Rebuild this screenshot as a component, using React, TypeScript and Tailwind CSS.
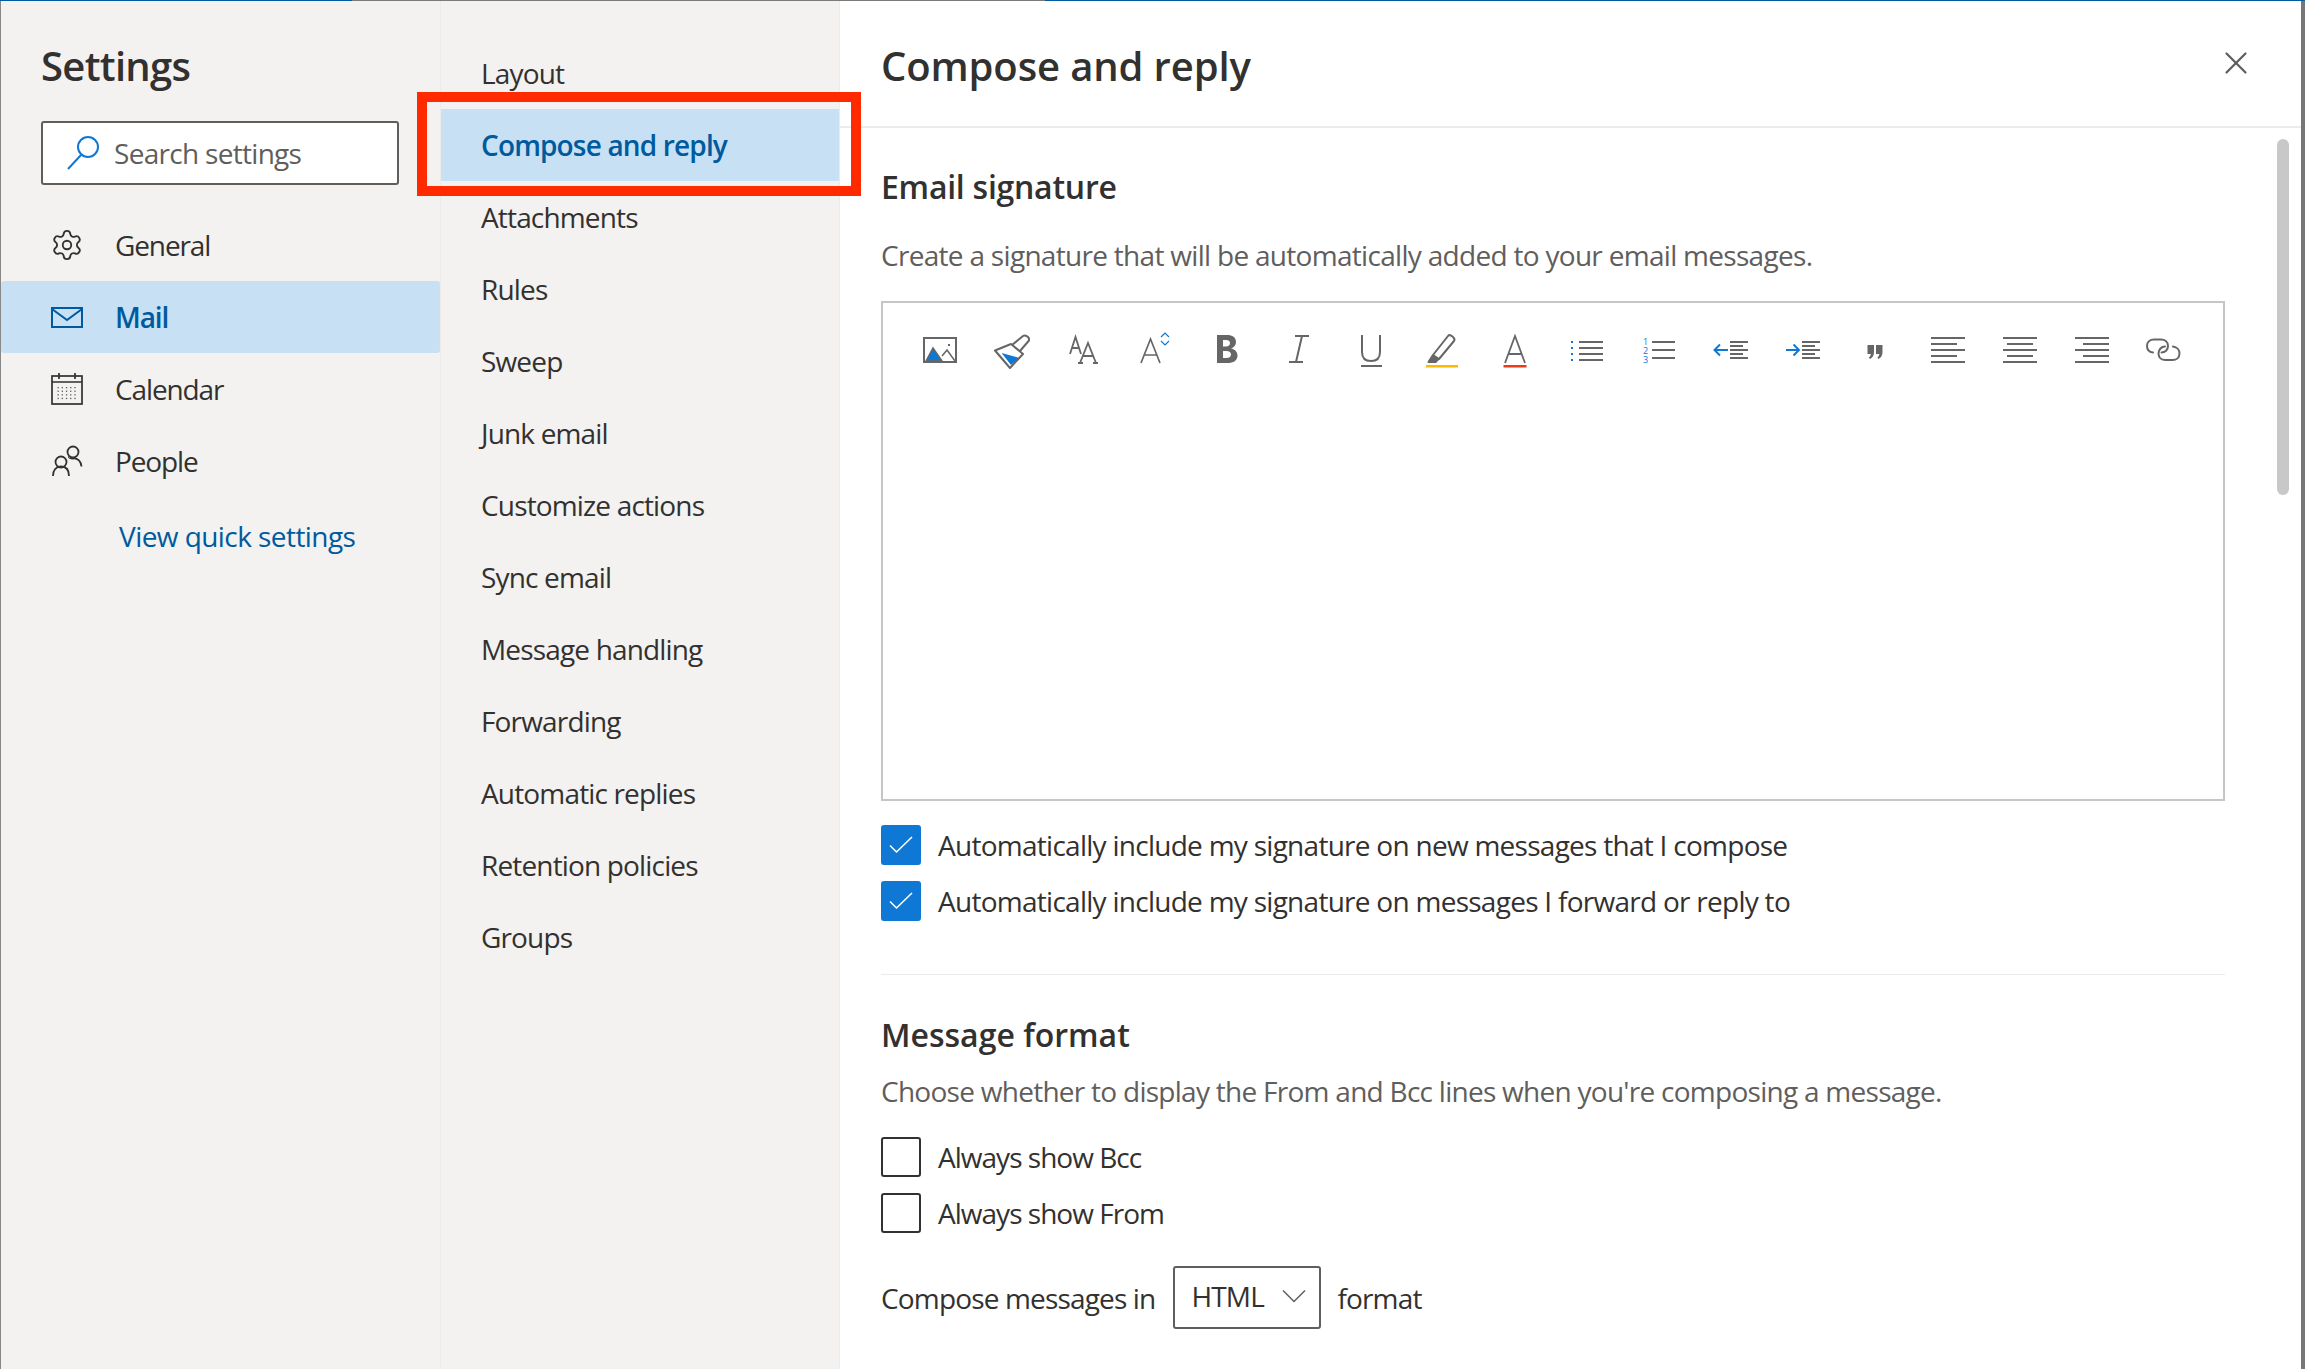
import { Settings as Gear, X } from "lucide-react"

const FONT = "font-['Open_Sans','Noto_Sans',sans-serif]"

const SUBNAV = [
  "Layout",
  "Compose and reply",
  "Attachments",
  "Rules",
  "Sweep",
  "Junk email",
  "Customize actions",
  "Sync email",
  "Message handling",
  "Forwarding",
  "Automatic replies",
  "Retention policies",
  "Groups"
]

function MailIcon() {
  return (
    <svg width="34" height="24" viewBox="0 0 34 24" fill="none" stroke="#005a9e" strokeWidth="2">
      <rect x="2" y="3" width="30" height="19" />
      <path d="M2 4l15 11L32 4" />
    </svg>
  )
}

function CalendarIcon() {
  const dots = []
  for (let r = 0; r < 4; r++) {
    for (let c = 0; c < 5; c++) {
      dots.push(<rect key={`${r}-${c}`} x={7.500 + c * 4.200} y={15 + r * 3.600} width="1.300" height="1.300" fill="#605e5c" stroke="none" />)
    }
  }
  return (
    <svg width="34" height="34" viewBox="0 0 34 34" fill="none" stroke="#323130" strokeWidth="1.700">
      <rect x="2" y="4" width="30" height="28" />
      <path d="M2 10h30M9 1v6M25 1v6" />
      {dots}
    </svg>
  )
}

function PeopleIcon() {
  return (
    <svg width="34" height="34" viewBox="0 0 34 34" fill="none" stroke="#323130" strokeWidth="1.800">
      <circle cx="23" cy="8" r="5.500" />
      <circle cx="11" cy="18" r="5.500" />
      <path d="M3 32c0-6 3-9.500 8-9.500s8 3.500 8 9.500" />
      <path d="M19 13c-.5 0 2 2 4 1.500 5-.5 8 3 8.500 8" />
    </svg>
  )
}

function NavRow({ icon, label, active }: { icon: React.ReactNode; label: string; active?: boolean }) {
  return (
    <div
      className={`flex h-[72px] items-center rounded-[3px] tracking-[-0.04em] ${active ? "bg-[#c7e0f4] font-semibold text-[#005a9e]" : "text-[#323130]"}`}
    >
      <span className="flex w-[114px] justify-center pl-[18px]">{icon}</span>
      <span>{label}</span>
    </div>
  )
}

function Check({ on, label, short }: { on?: boolean; label: string; short?: boolean }) {
  return (
    <div className={`flex h-[40px] items-center gap-[17px] text-[#323130] ${short ? "tracking-[-0.035em]" : "tracking-[-0.026em]"}`}>
      {on ? (
        <span className="h-[40px] w-[40px] rounded-[3px] bg-[#0f78d4]">
          <svg width="40" height="40" viewBox="0 0 40 40" fill="none" stroke="#fff" strokeWidth="1.600">
            <path d="M9 20.500l6.500 6.500L31 12" />
          </svg>
        </span>
      ) : (
        <span className="h-[40px] w-[40px] rounded-[3px] border-2 border-[#323130] bg-white" />
      )}
      <span>{label}</span>
    </div>
  )
}

const GRAY = "#666666"
const BLUE = "#0f78d4"

function Lines({ rows }: { rows: [number, number, number][] }) {
  return (
    <path d={rows.map(([x1, x2, y]) => `M${x1} ${y}H${x2}`).join("")} stroke={GRAY} strokeWidth="2" fill="none" />
  )
}

const TOOLBAR: React.ReactNode[] = [
  // picture
  <g key="pic" transform="translate(1 0)">
    <rect x="5" y="9" width="32" height="24" fill="none" stroke={GRAY} strokeWidth="2" />
    <path d="M7 32l7-13 9 13z" fill={BLUE} stroke={GRAY} strokeWidth="1.500" />
    <path d="M23 27l5-6 8 11" fill="none" stroke={GRAY} strokeWidth="1.500" />
    <rect x="29" y="15" width="2" height="2" fill={GRAY} />
  </g>,
  // format painter
  <g key="brush" fill="none" stroke={GRAY} strokeWidth="2" transform="translate(2 0)">
    <path d="M9.600 24l17.900 5-8.500 7z" fill={BLUE} stroke="none" />
    <path d="M3 21.500L19 15l12 10-13 14z" strokeLinejoin="round" />
    <path d="M20 16L31 7c2-1.500 7 1 6 4.500L28 22" strokeLinejoin="round" />
  </g>,
  // font size
  <g key="size" fill="none" stroke={GRAY} strokeWidth="1.800">
    <path d="M8 25l5.500-17L19 25M10 19h7" />
    <path d="M18 34l8-20 8 20M16 34h5M31 34h5M20.500 27h11" />
  </g>,
  // grow font
  <g key="grow" fill="none">
    <path d="M7 34l9.500-24L26 34M10 26h13" stroke={GRAY} strokeWidth="1.700" />
    <path d="M27 8l4-4 4 4M27 12l4 4 4-4" stroke={BLUE} strokeWidth="1.200" />
  </g>,
  // bold
  <path
    key="bold"
    fillRule="evenodd"
    fill={GRAY}
    d="M11 6h10c5.500 0 9 2.500 9 7 0 3-2 5.500-5 6.500 4 .7 6.500 3.500 6.500 7 0 5-4 7.500-10 7.500H11zM17 11v6.500h3c2.500 0 4-1.200 4-3.500 0-2-1.500-3-4-3zM17 22v7h3.500c3 0 4.500-1.300 4.500-3.500 0-2.300-1.700-3.500-4.500-3.500z"
  />,
  // italic
  <path key="italic" d="M17 7h14M11 33h14M24 7l-6 26" fill="none" stroke={GRAY} strokeWidth="2" />,
  // underline
  <path key="under" d="M12 6v17c0 6 3.500 9 9 9s9-3 9-9V6M11 37h21" fill="none" stroke={GRAY} strokeWidth="2" />,
  // highlight
  <g key="hl">
    <path d="M11 26l-4.500 7h7l3-3M11 26l15-19c2-2.500 8 2 6 5L17 30z" fill="none" stroke={GRAY} strokeWidth="2" strokeLinejoin="round" />
    <path d="M11 26l-4.500 7h7l3-3z" fill={GRAY} />
    <rect x="4" y="36" width="32" height="2.500" fill="#ffb900" />
  </g>,
  // font colour
  <g key="color">
    <path d="M11 34l10-27 10 27M14.500 25h13" fill="none" stroke={GRAY} strokeWidth="1.800" />
    <rect x="9.500" y="36" width="23" height="2.500" fill="#f03a17" />
  </g>,
  // bullets
  <g key="bullets">
    <Lines rows={[[13, 37, 13], [13, 37, 19], [13, 37, 25], [13, 37, 31]]} />
    <path d="M5 12h2v2H5zM5 18h2v2H5zM5 24h2v2H5zM5 30h2v2H5z" fill={BLUE} />
  </g>,
  // numbering
  <g key="numbers">
    <Lines rows={[[14, 37, 13], [14, 37, 21], [14, 37, 29]]} />
    <text x="5" y="16" fontSize="9" fill={BLUE}>1</text>
    <text x="5" y="25" fontSize="9" fill={BLUE}>2</text>
    <text x="5" y="34" fontSize="9" fill={BLUE}>3</text>
  </g>,
  // outdent
  <g key="out">
    <Lines rows={[[20, 38, 13], [20, 33, 17], [20, 38, 21], [20, 33, 25], [20, 38, 29]]} />
    <path d="M18 21H5M10 15.500L4.500 21l5.500 5.500" fill="none" stroke={BLUE} strokeWidth="2" />
  </g>,
  // indent
  <g key="in">
    <Lines rows={[[20, 38, 13], [20, 33, 17], [20, 38, 21], [20, 33, 25], [20, 38, 29]]} />
    <path d="M4 21h13M11.500 15.500L17 21l-5.500 5.500" fill="none" stroke={BLUE} strokeWidth="2" />
  </g>,
  // quote
  <path
    key="quote"
    fill={GRAY}
    d="M13.500 16h6.500v7c0 3.200-1.200 5.800-4 7l-1.200-1.500c1.100-.7 1.900-1.900 2-3.500h-3.300zM22 16h6.500v7c0 3.200-1.200 5.800-4 7l-1.200-1.500c1.100-.7 1.900-1.900 2-3.500H22z"
  />,
  // align left
  <Lines key="al" rows={[[5, 39, 9], [5, 31, 15], [5, 39, 21], [5, 31, 27], [5, 39, 33]]} />,
  // align center
  <Lines key="ac" rows={[[5, 39, 9], [9, 35, 15], [5, 39, 21], [9, 35, 27], [5, 39, 33]]} />,
  // align right
  <Lines key="ar" rows={[[5, 39, 9], [13, 39, 15], [5, 39, 21], [13, 39, 27], [5, 39, 33]]} />,
  // link
  <path
    key="link"
    fill="none"
    stroke={GRAY}
    strokeWidth="2"
    strokeLinecap="round"
    d="M11 23.500C7 23 5 20.500 5 17c0-4 3-6.500 7-6.500h7c4 0 7 2.500 7 6.500 0 4-3 6.500-6.500 6.500M31 17.500c4 .5 6.500 3.500 6.500 7 0 4-3 6.500-7 6.500h-7c-4 0-7-2.500-7-6.500 0-4 3-7 6.500-7"
  />
]

export default function App() {
  return (
    <div className={`${FONT} relative flex h-[1369px] w-[2305px] flex-col overflow-hidden bg-white text-[28px] tracking-[-0.025em]`}>
      <div className="flex h-[1px] shrink-0 bg-[#005a9e]">
        <div className="ml-[352px] w-[693px] bg-[#7a7a78]" />
      </div>

      <div className="flex min-h-0 flex-1 border-r-4 border-l border-r-[#777777] border-l-[#8a8886]">
        <aside className="flex w-[439px] flex-col bg-[#f3f2f1]">
          <h1 className="mt-[43px] ml-[40px] h-[44px] text-[40px] leading-[44px] font-semibold text-[#323130]">Settings</h1>
          <div className="mt-[33px] ml-[40px] flex h-[64px] w-[358px] items-center rounded-[3px] border-2 border-[#605e5c] bg-white">
            <svg className="ml-[23px]" width="36" height="36" viewBox="0 0 36 36" fill="none" stroke="#0f78d4" strokeWidth="2">
              <circle cx="22" cy="12" r="10" />
              <path d="M15 20L2 34" />
            </svg>
            <span className="ml-[12px] text-[#605e5c]">Search settings</span>
          </div>
          <nav className="mt-[24px] flex flex-col">
            <NavRow icon={<Gear size={34} strokeWidth={1.3} />} label="General" />
            <NavRow icon={<MailIcon />} label="Mail" active />
            <NavRow icon={<CalendarIcon />} label="Calendar" />
            <NavRow icon={<PeopleIcon />} label="People" />
          </nav>
          <a className="mt-[22px] ml-[118px] h-[34px] leading-[34px] tracking-[-0.02em] text-[#005a9e]">View quick settings</a>
        </aside>

        <section className="flex w-[400px] flex-col border-x border-[#edebe9] bg-[#f3f2f1] pt-[36px] tracking-[-0.03em] text-[#323130]">
          {SUBNAV.map((item) => (
            <div
              key={item}
              className={`flex h-[72px] items-center pl-[40px] ${item === "Compose and reply" ? "bg-[#c7e0f4] font-semibold text-[#005a9e]" : ""}`}
            >
              {item}
            </div>
          ))}
        </section>

        <main className="flex min-w-0 flex-1 flex-col">
          <header className="flex h-[127px] shrink-0 items-start justify-between border-b-2 border-[#edebe9]">
            <h2 className="mt-[43px] ml-[41px] text-[40px] leading-[44px] font-semibold tracking-[-0.003em] text-[#323130]">Compose and reply</h2>
            <X className="mt-[43px] mr-[46px] text-[#605e5c]" size={38} strokeWidth={1.4} />
          </header>

          <div className="pl-[41px] text-[#323130]">
            <h3 className="mt-[39px] h-[40px] text-[32px] leading-[40px] font-semibold tracking-[-0.008em]">Email signature</h3>
            <p className="mt-[28px] h-[40px] leading-[40px] tracking-[-0.025em] text-[#605e5c]">
              Create a signature that will be automatically added to your email messages.
            </p>

            <div className="mt-[26px] h-[500px] w-[1344px] border-2 border-[#c8c6c4] pt-[26px] pl-[19px]">
              <div className="flex">
                {TOOLBAR.map((icon, i) => (
                  <div key={i} className="flex w-[72px] justify-center">
                    <svg width="40" height="40" viewBox="0 0 40 40">
                      {icon}
                    </svg>
                  </div>
                ))}
              </div>
            </div>

            <div className="mt-[24px] flex flex-col gap-[16px]">
              <Check on label="Automatically include my signature on new messages that I compose" />
              <Check on label="Automatically include my signature on messages I forward or reply to" />
            </div>

            <div className="mt-[53px] h-[1px] w-[1344px] bg-[#edebe9]" />

            <h3 className="mt-[40px] h-[40px] text-[32px] leading-[40px] font-semibold tracking-[0em]">Message format</h3>
            <p className="mt-[16px] h-[40px] leading-[40px] tracking-[-0.026em] text-[#605e5c]">
              Choose whether to display the From and Bcc lines when you're composing a message.
            </p>

            <div className="mt-[26px] flex flex-col gap-[16px]">
              <Check short label="Always show Bcc" />
              <Check short label="Always show From" />
            </div>

            <div className="mt-[33px] flex h-[63px] items-center tracking-[-0.03em]">
              <span>Compose messages in</span>
              <div className="mr-[16px] ml-[18px] flex h-[63px] w-[148px] items-center justify-between rounded-[3px] border-2 border-[#605e5c] pr-[13px] pl-[16px] pb-[4px]">
                <span>HTML</span>
                <svg width="24" height="14" viewBox="0 0 24 14" fill="none" stroke="#605e5c" strokeWidth="1.500">
                  <path d="M1 1.500l11 11 11-11" />
                </svg>
              </div>
              <span>format</span>
            </div>
          </div>
        </main>
      </div>

      {/* annotation box drawn over the screenshot */}
      <div className="absolute top-[92px] left-[417px] h-[104px] w-[444px] border-[10px] border-[#ff2a00]" />
      {/* scrollbar thumb */}
      <div className="absolute top-[139px] left-[2277px] h-[356px] w-[12px] rounded-full bg-[#c8c8c8]" />
    </div>
  )
}
